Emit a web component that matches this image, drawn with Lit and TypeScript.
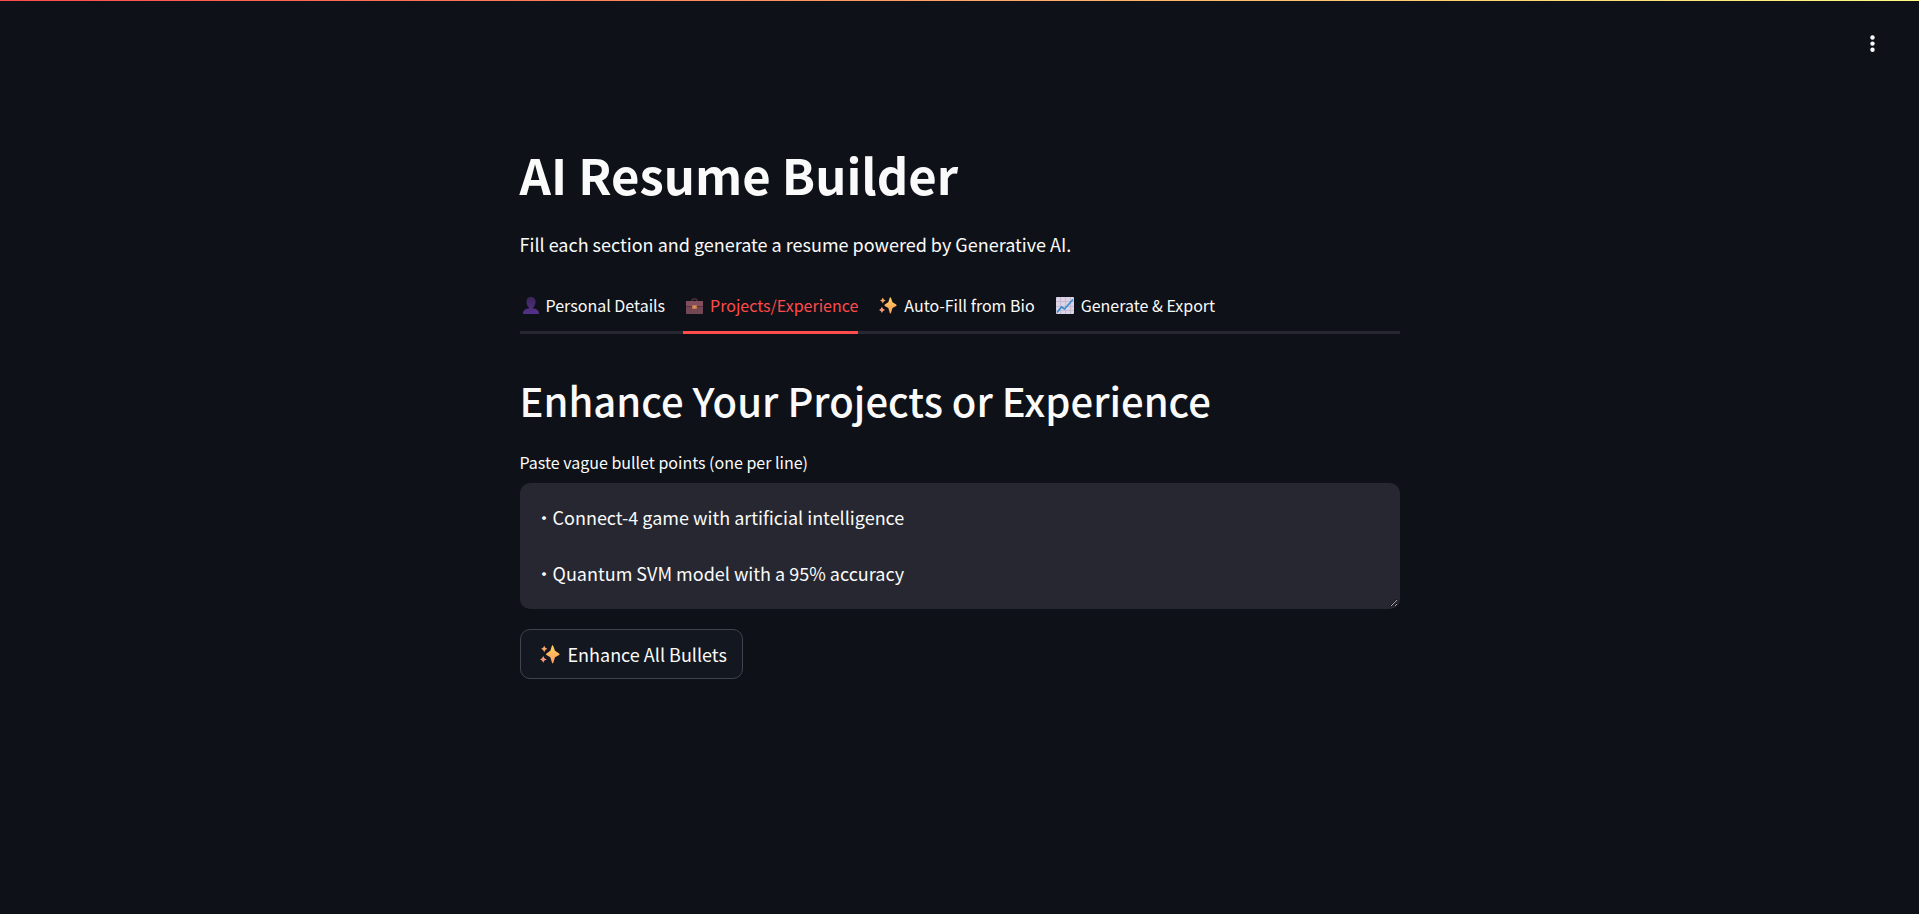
import { LitElement, html, css, svg } from "lit";
import { customElement, state } from "lit/decorators.js";

const person = svg`
  <defs><linearGradient id="p" x1="0" y1="0" x2="0" y2="1"><stop offset="0" stop-color="#3b2659"/><stop offset="1" stop-color="#55318a"/></linearGradient></defs>
  <path fill="url(#p)" d="M8 0C4.800 0 3.300 2 3.500 5C3.600 7.600 4.500 9.500 6 10.600V11.300C2.600 11.800 0 12.800 0 17H16C16 12.800 13.400 11.800 10 11.300V10.600C11.500 9.500 12.400 7.600 12.500 5C12.700 2 11.200 0 8 0Z"/>`;

const briefcase = svg`
  <path fill="none" stroke="#4d3339" stroke-width="1.500" d="M6 4V3.500C6 2.500 6.500 2 7.500 2H9.500C10.500 2 11 2.500 11 3.500V4"/>
  <rect y="4" width="17" height="13" rx="0.800" fill="#734753"/>
  <path fill="#834f5e" d="M0 4.800Q0 4 .8 4H16.200Q17 4 17 4.800V9H0Z"/>
  <rect y="9" width="17" height="1" fill="#563441"/>
  <rect x="6" y="8" width="5" height="4" rx="1" fill="#c3764f"/>
  <rect x="7.500" y="9" width="2" height="2" fill="#e09a5e"/>`;

const sparkles = svg`
  <defs><linearGradient id="s" x1="0" y1="0" x2="0" y2="1"><stop offset="0" stop-color="#ffd35c"/><stop offset="1" stop-color="#ff9a62"/></linearGradient></defs>
  <path fill="url(#s)" d="M10.800 0.400Q11.600 0 12 1L13.500 5.200L17.200 7.500Q18 8.200 17.200 8.900L13.500 11L12 16Q11.400 17 10.800 16L9.300 11L5.800 8.900Q5 8.200 5.800 7.500L9.300 5.200Z"/>
  <path fill="#f6a866" d="M3.800 .6L4.800 2.500L6.600 3.400L4.800 4.400L3.800 6.400L2.800 4.400L1 3.400L2.800 2.500Z"/>
  <path fill="#fb9873" d="M2.900 9.800L4 11.800L6 12.900L4 14L2.900 16L1.800 14L0 12.900L1.800 11.800Z"/>`;

const chart = svg`
  <rect width="18" height="17" rx="1" fill="#dcd3e6"/>
  <path stroke="#c4bad2" fill="none" d="M4.500 0V17M9.500 0V17M14.500 0V17M0 4.500H18M0 9.500H18M0 13.500H18"/>
  <path stroke="#388fd0" stroke-width="1.700" fill="none" d="M1 15.500L5.500 10L8.500 12L17 2.500"/>`;

const tabs = [
  { label: "Personal Details", icon: person, width: 16 },
  { label: "Projects/Experience", icon: briefcase, width: 17 },
  { label: "Auto-Fill from Bio", icon: sparkles, width: 18 },
  { label: "Generate & Export", icon: chart, width: 18 },
];

@customElement("app-root")
export class AppRoot extends LitElement {
  @state() private active = 1;

  static styles = css`
    :host {
      display: block;
      min-height: 100vh;
      box-sizing: border-box;
      background: #0e1117;
      color: #fafafa;
      color-scheme: dark;
      font: 400 18px/28px "Noto Sans CJK SC", "Noto Sans", sans-serif;
    }
    .stripe { height: 1px; background: linear-gradient(90deg, #ff4b4b, #fffd80); }
    .toolbar { display: flex; justify-content: flex-end; padding: 28px 32px 0; }
    .menu {
      display: grid;
      place-items: center;
      width: 30px;
      height: 30px;
      padding: 0;
      border: 0;
      background: none;
      color: inherit;
    }
    .page { max-width: 880px; margin: 0 auto; padding: 77px 20px; }
    h1, h2, p { margin: 0; }
    h1 { font-size: 49px; line-height: 76px; font-weight: 700; }
    h2 { font-size: 40px; line-height: 56px; font-weight: 500; }
    .intro { margin-top: 18px; }
    .tabs {
      display: flex;
      gap: 18px;
      margin-top: 25px;
      box-shadow: inset 0 -3px #262730;
    }
    .tab {
      display: flex;
      align-items: center;
      gap: 7px;
      height: 51px;
      padding: 0 0 4px 3px;
      border: 0;
      border-bottom: 3px solid transparent;
      background: none;
      color: inherit;
      font: inherit;
      font-size: 16px;
      white-space: nowrap;
      cursor: pointer;
    }
    .tab.active { color: #ff4b4b; border-bottom-color: #ff4b4b; }
    .panel { margin-top: 38px; }
    .label { display: block; margin-top: 20px; font-size: 16px; }
    .bullets {
      display: block;
      box-sizing: border-box;
      width: 100%;
      height: 126px;
      margin-top: 7px;
      padding: 18px;
      border: 2px solid #262730;
      border-radius: 10px;
      background: #262730;
      color: inherit;
      font: inherit;
      font-feature-settings: "palt", "pwid";
      resize: vertical;
      outline: 0;
    }
    .enhance {
      display: flex;
      align-items: center;
      gap: 8px;
      height: 50px;
      margin-top: 20px;
      padding: 0 15px 0 19px;
      border: 1px solid #41444c;
      border-radius: 10px;
      background: #131720;
      color: inherit;
      font: inherit;
      cursor: pointer;
    }
  `;

  render() {
    return html`
      <div class="stripe"></div>
      <header class="toolbar">
        <button class="menu" aria-label="Main menu">
          <svg width="6" height="20" viewBox="0 0 6 20" fill="currentColor">
            <circle cx="3.500" cy="3.500" r="2.200" /><circle cx="3.500" cy="9.600" r="2.200" /><circle cx="3.500" cy="15.800" r="2.200" />
          </svg>
        </button>
      </header>
      <main class="page">
        <h1>AI Resume Builder</h1>
        <p class="intro">Fill each section and generate a resume powered by Generative AI.</p>
        <div class="tabs" role="tablist">
          ${tabs.map(
            (tab, i) => html`<button
              class="tab ${i === this.active ? "active" : ""}"
              role="tab"
              aria-selected=${i === this.active}
              @click=${() => (this.active = i)}
            ><svg width=${tab.width} height="17" viewBox="0 0 ${tab.width} 17" aria-hidden="true">${tab.icon}</svg><span>${tab.label}</span></button>`
          )}
        </div>
        <section class="panel">
          <h2>Enhance Your Projects or Experience</h2>
          <label class="label" for="bullets">Paste vague bullet points (one per line)</label>
          <textarea class="bullets" id="bullets" .value=${"• Connect-4 game with artificial intelligence\n\n• Quantum SVM model with a 95% accuracy"}></textarea>
          <button class="enhance">
            <svg width="20" height="19" viewBox="0 0 18 17" aria-hidden="true">${sparkles}</svg>
            <span>Enhance All Bullets</span>
          </button>
        </section>
      </main>
    `;
  }
}
